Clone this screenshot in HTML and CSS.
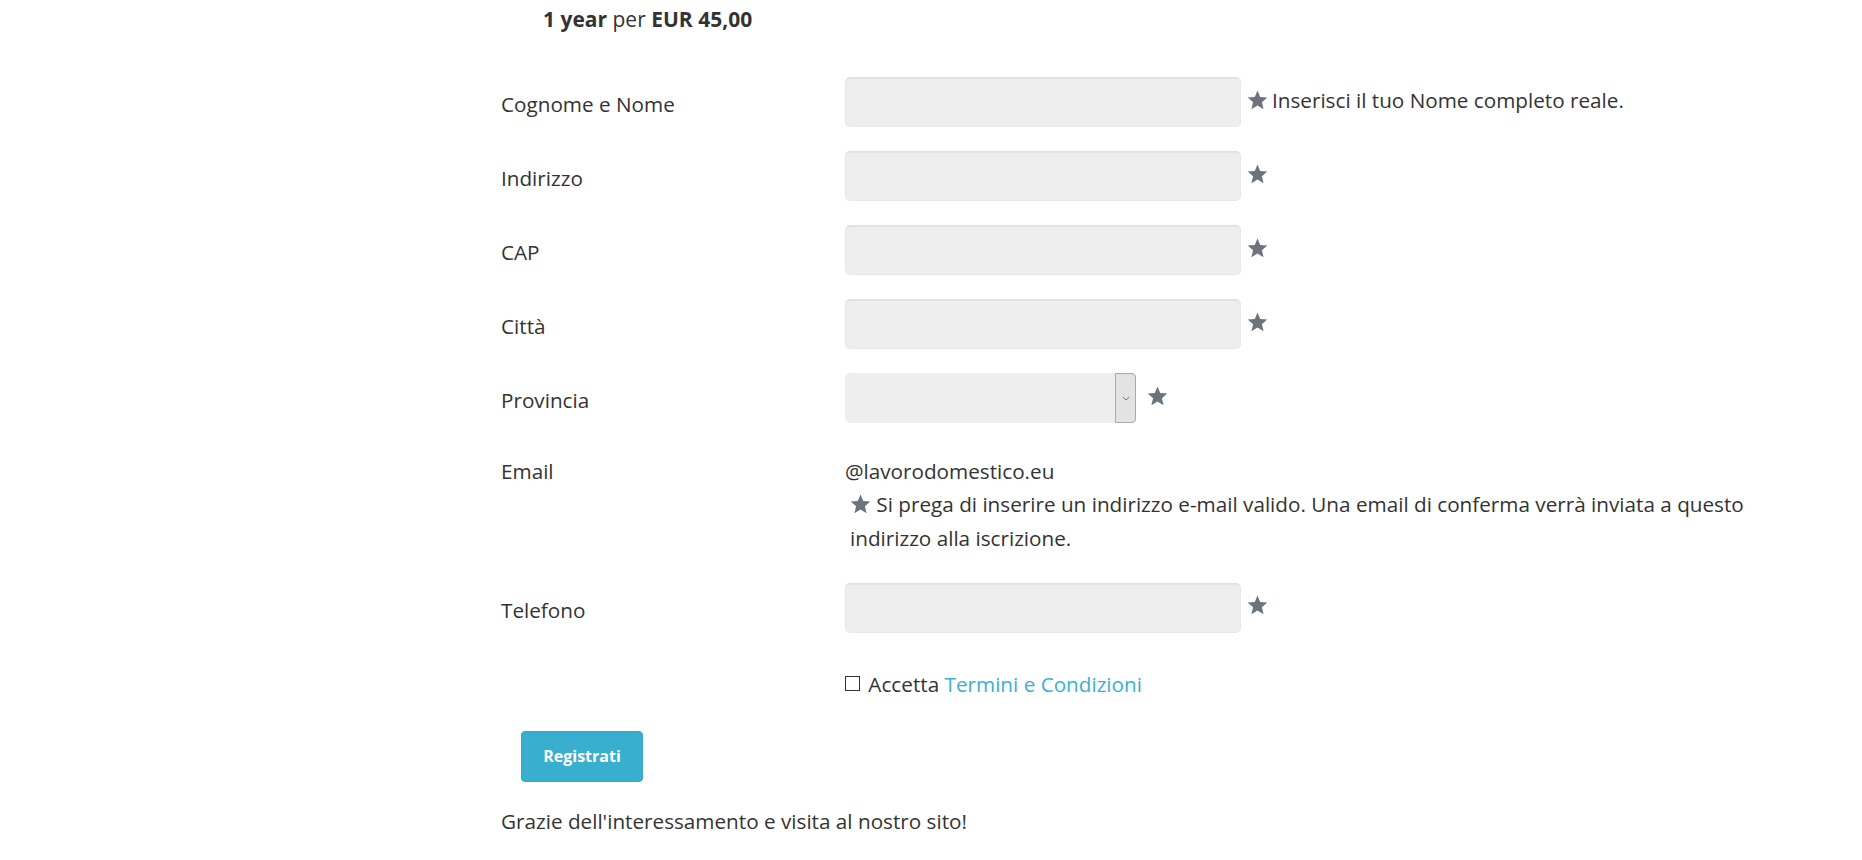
FILE: index.html
```html
<!DOCTYPE html>
<html lang="it">
<head>
<meta charset="utf-8">
<title>Registrazione</title>
<link rel="stylesheet" href="styles.css">
</head>
<body>
<div class="page">
  <p class="plan"><b>1 year</b> per <b>EUR 45,00</b></p>

  <form class="form">
    <div class="row">
      <label class="lbl">Cognome e Nome</label>
      <div class="ctrl">
        <input class="field" type="text">
        <span class="after">
          <span class="req"><svg viewBox="0 0 20 19"><polygon points="10,0.5 12.6,6.6 19.3,7.2 14.2,11.6 15.8,18.3 10,14.8 4.2,18.3 5.8,11.6 0.7,7.2 7.4,6.6"/></svg></span>
          <span class="hint">Inserisci il tuo Nome completo reale.</span>
        </span>
      </div>
    </div>
    <div class="row">
      <label class="lbl">Indirizzo</label>
      <div class="ctrl">
        <input class="field" type="text">
        <span class="after"><span class="req"><svg viewBox="0 0 20 19"><polygon points="10,0.5 12.6,6.6 19.3,7.2 14.2,11.6 15.8,18.3 10,14.8 4.2,18.3 5.8,11.6 0.7,7.2 7.4,6.6"/></svg></span></span>
      </div>
    </div>
    <div class="row">
      <label class="lbl">CAP</label>
      <div class="ctrl">
        <input class="field" type="text">
        <span class="after"><span class="req"><svg viewBox="0 0 20 19"><polygon points="10,0.5 12.6,6.6 19.3,7.2 14.2,11.6 15.8,18.3 10,14.8 4.2,18.3 5.8,11.6 0.7,7.2 7.4,6.6"/></svg></span></span>
      </div>
    </div>
    <div class="row">
      <label class="lbl">Città</label>
      <div class="ctrl">
        <input class="field" type="text">
        <span class="after"><span class="req"><svg viewBox="0 0 20 19"><polygon points="10,0.5 12.6,6.6 19.3,7.2 14.2,11.6 15.8,18.3 10,14.8 4.2,18.3 5.8,11.6 0.7,7.2 7.4,6.6"/></svg></span></span>
      </div>
    </div>
    <div class="row">
      <label class="lbl">Provincia</label>
      <div class="ctrl">
        <div class="select">
          <span class="select-box"></span>
          <span class="select-btn"><svg viewBox="0 0 10 6"><polyline points="1,1 5,5 9,1"/></svg></span>
        </div>
        <span class="after"><span class="req req-sel"><svg viewBox="0 0 20 19"><polygon points="10,0.5 12.6,6.6 19.3,7.2 14.2,11.6 15.8,18.3 10,14.8 4.2,18.3 5.8,11.6 0.7,7.2 7.4,6.6"/></svg></span></span>
      </div>
    </div>
    <div class="row row-email">
      <label class="lbl">Email</label>
      <div class="email">
        <div>@lavorodomestico.eu</div>
        <div class="help"><span class="req req-inline"><svg viewBox="0 0 20 19"><polygon points="10,0.5 12.6,6.6 19.3,7.2 14.2,11.6 15.8,18.3 10,14.8 4.2,18.3 5.8,11.6 0.7,7.2 7.4,6.6"/></svg></span> Si prega di inserire un indirizzo e-mail valido. Una email di conferma verrà inviata a questo indirizzo alla iscrizione.</div>
      </div>
    </div>
    <div class="row row-tel">
      <label class="lbl">Telefono</label>
      <div class="ctrl">
        <input class="field" type="text">
        <span class="after"><span class="req"><svg viewBox="0 0 20 19"><polygon points="10,0.5 12.6,6.6 19.3,7.2 14.2,11.6 15.8,18.3 10,14.8 4.2,18.3 5.8,11.6 0.7,7.2 7.4,6.6"/></svg></span></span>
      </div>
    </div>
    <div class="row row-terms">
      <span class="lbl"></span>
      <div class="terms"><span class="box"></span> Accetta <a href="#">Termini e Condizioni</a></div>
    </div>
    <div class="actions">
      <button type="button" class="btn">Registrati</button>
    </div>
  </form>

  <p class="thanks">Grazie dell'interessamento e visita al nostro sito!</p>
</div>
</body>
</html>
```

FILE: styles.css
```css
html, body {
  margin: 0;
  background: #fff;
}
body {
  font-family: "Open Sans", "Noto Sans", sans-serif;
  font-size: 20.7px;
  color: #333;
}
.page {
  padding-left: 501px;
}
.plan {
  margin: 0;
  padding: 4px 0 0 42px;
  line-height: 30px;
  font-size: 21px;
}
.plan b {
  font-weight: 700;
}
.form {
  margin-top: 43px;
}
.row {
  display: flex;
  align-items: center;
  height: 50px;
  margin-bottom: 24px;
}
.lbl {
  width: 344px;
  flex: none;
  padding-top: 4px;
}
.ctrl {
  display: flex;
  align-items: center;
}
.after {
  display: flex;
  align-items: center;
  margin-top: -5px;
}
.field {
  width: 396px;
  height: 50px;
  box-sizing: border-box;
  background: #eee;
  border: 1px solid #e8e8e8;
  border-top-color: #e0e0e0;
  border-radius: 5px;
  box-shadow: inset 0 1px 1px rgba(0,0,0,.05);
  font: inherit;
  padding: 0 12px;
  margin: 0;
}
.req {
  display: inline-flex;
  width: 21px;
  height: 20px;
  margin-left: 6px;
}
.req svg {
  width: 21px;
  height: 20px;
  fill: #6b737c;
}
.req-sel {
  margin-left: 11px;
}
.hint {
  margin-left: 4px;
}
.select {
  display: flex;
  width: 291px;
  height: 50px;
  box-sizing: border-box;
  background: #eee;
  border-radius: 5px;
}
.select-box {
  flex: 1;
}
.select-btn {
  width: 21px;
  box-sizing: border-box;
  background: #e3e3e3;
  border: 1px solid #a9a9a9;
  border-radius: 0 4px 4px 0;
  display: flex;
  align-items: center;
  justify-content: center;
}
.select-btn svg {
  width: 8px;
  height: 5px;
  fill: none;
  stroke: #555;
  stroke-width: 1;
}
.row-email {
  height: auto;
  align-items: flex-start;
  margin-top: 32px;
  margin-bottom: 28px;
}
.row-email .lbl {
  padding-top: 0;
}
.row-email, .row-email .lbl, .email {
  line-height: 33.3px;
}
.email {
  width: 900px;
}
.help {
  padding-left: 5px;
}
.req-inline {
  margin-left: 0;
  vertical-align: -2px;
}
.row-tel {
  margin-bottom: 34px;
}
.row-terms {
  height: 34px;
  margin-bottom: 0;
}
.terms {
  display: flex;
  align-items: center;
  white-space: pre;
}
.box {
  display: inline-block;
  width: 13px;
  height: 13px;
  border: 1.5px solid #333;
  margin-right: 3px;
}
.terms a {
  color: #3ab0d0;
  text-decoration: none;
}
.actions {
  padding: 30px 0 0 20px;
}
.btn {
  width: 122px;
  height: 51px;
  background: #38afcf;
  border: 1px solid #34a8c6;
  border-radius: 4px;
  color: #fff;
  font-family: inherit;
  font-size: 16px;
  font-weight: 700;
  padding: 0;
}
.thanks {
  margin: 24px 0 0;
  line-height: 30px;
}
```
